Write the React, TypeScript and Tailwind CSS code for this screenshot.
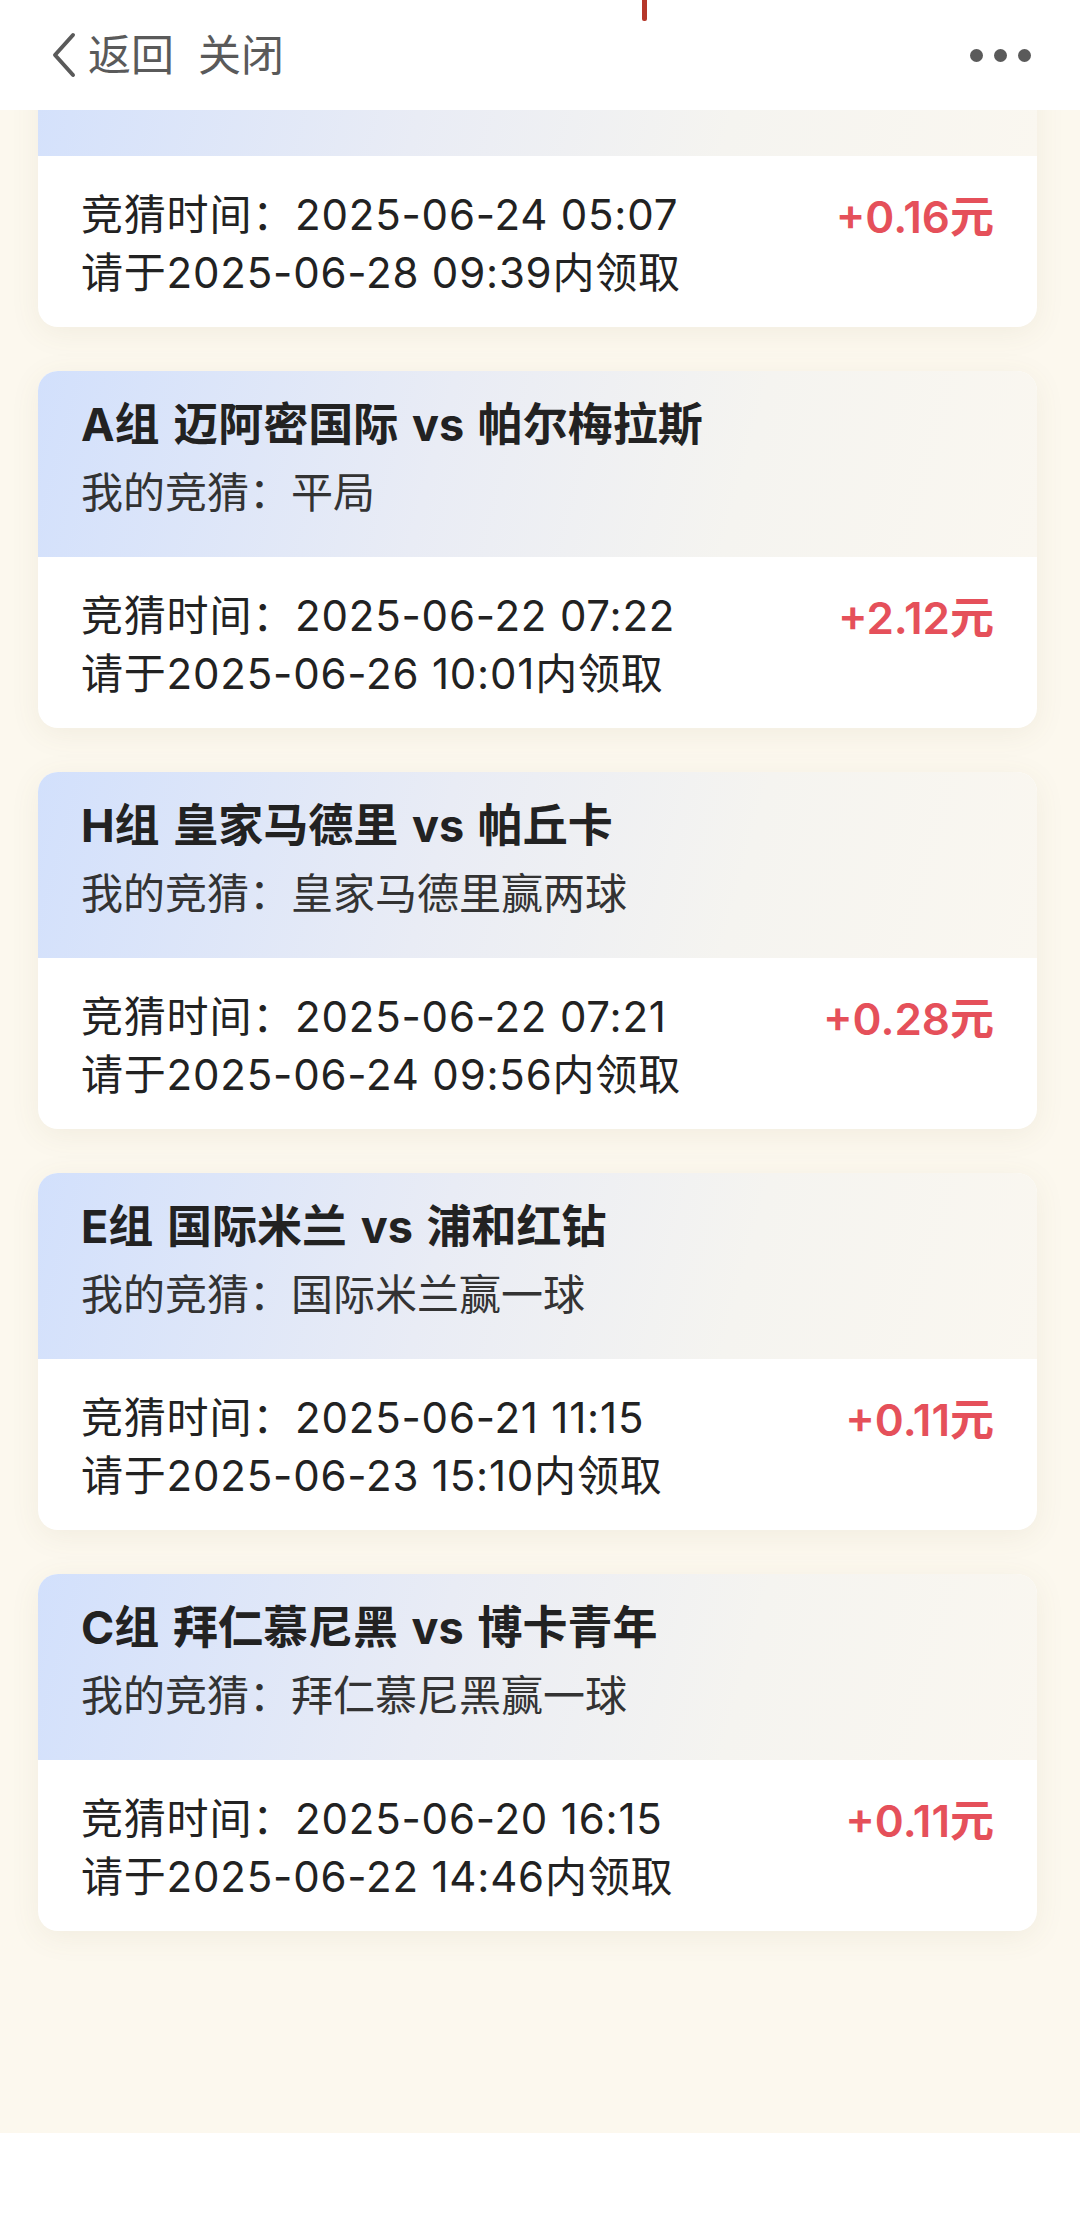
import React from "react";

type Bet = {
  title: string;
  pick: string;
  time: string;
  deadline: string;
  amount: string;
};

const bets: Bet[] = [
  { title: "", pick: "", time: "2025-06-24 05:07", deadline: "2025-06-28 09:39", amount: "+0.16元" },
  { title: "A组 迈阿密国际 vs 帕尔梅拉斯", pick: "平局", time: "2025-06-22 07:22", deadline: "2025-06-26 10:01", amount: "+2.12元" },
  { title: "H组 皇家马德里 vs 帕丘卡", pick: "皇家马德里赢两球", time: "2025-06-22 07:21", deadline: "2025-06-24 09:56", amount: "+0.28元" },
  { title: "E组 国际米兰 vs 浦和红钻", pick: "国际米兰赢一球", time: "2025-06-21 11:15", deadline: "2025-06-23 15:10", amount: "+0.11元" },
  { title: "C组 拜仁慕尼黑 vs 博卡青年", pick: "拜仁慕尼黑赢一球", time: "2025-06-20 16:15", deadline: "2025-06-22 14:46", amount: "+0.11元" },
];

function BetCard({ bet }: { bet: Bet }) {
  return (
    <div className="ml-[38px] w-[999px] rounded-[20px] overflow-hidden bg-white shadow-[0_6px_30px_rgba(120,100,60,0.08)]">
      {/* 上半部分：对阵 + 我的竞猜 */}
      <div className="h-[186px] px-[43px] pt-[24px] bg-[linear-gradient(105deg,#d2e0fc_0%,#e9ecf5_40%,#f5f4f0_70%,#faf7f0_100%)]">
        <div className="text-[45px] leading-[60px] font-bold text-[#222] [word-spacing:3px]">{bet.title}</div>
        <div className="mt-[10px] text-[42px] leading-[56px] text-[#333]">
          {bet.pick && <>我的竞猜：{bet.pick}</>}
        </div>
      </div>
      {/* 下半部分：时间 + 金额 */}
      <div className="h-[171px] px-[43px] pt-[30px] flex justify-between items-start">
        <div className="text-[42px] leading-[58px] text-[#222] tracking-[0.8px]">
          <div>竞猜时间：{bet.time}</div>
          <div>请于{bet.deadline}内领取</div>
        </div>
        <div className="text-[44px] leading-[62px] font-semibold text-[#e5505a]">{bet.amount}</div>
      </div>
    </div>
  );
}

export default function App() {
  return (
    <div className="w-[1080px] h-[2218px] flex flex-col bg-white font-['Inter','Noto_Sans_CJK_SC',sans-serif]">
      <header className="relative h-[110px] shrink-0 bg-white flex items-center justify-between pl-[50px] pr-[49px] z-10">
        <span className="absolute left-[642px] top-0 w-[5px] h-[21px] rounded-b-[2px] bg-[#b5372a]" />
        <div className="flex items-center text-[43px] text-[#5a5a5a]">
          <svg width="28" height="46" viewBox="0 0 28 46" className="mr-[10px]">
            <polyline points="23,3 5,23 23,43" fill="none" stroke="#5a5a5a" strokeWidth="4" strokeLinecap="round" strokeLinejoin="round" />
          </svg>
          <span>返回</span>
          <span className="ml-[24px]">关闭</span>
        </div>
        <div className="flex items-center gap-[11px]">
          <span className="w-[13px] h-[13px] rounded-full bg-[#5a5a5a]" />
          <span className="w-[13px] h-[13px] rounded-full bg-[#5a5a5a]" />
          <span className="w-[13px] h-[13px] rounded-full bg-[#5a5a5a]" />
        </div>
      </header>

      <main className="h-[2023px] shrink-0 overflow-hidden bg-[#fcf8ee]">
        <div className="-mt-[140px] flex flex-col gap-[44px]">
          {bets.map((bet, i) => (
            <BetCard key={i} bet={bet} />
          ))}
        </div>
      </main>

      <div className="flex-1 bg-white" />
    </div>
  );
}
